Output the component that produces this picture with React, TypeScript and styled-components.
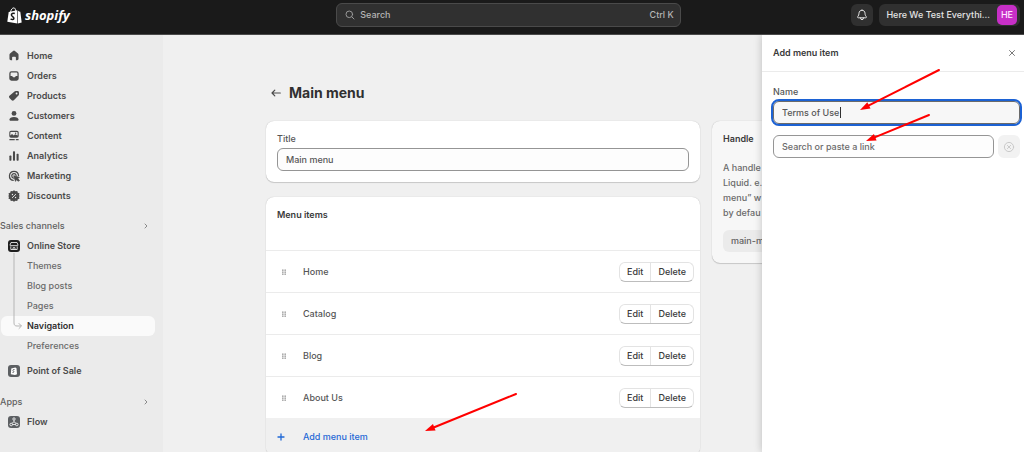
import React, { useState } from "react";
import styled, { createGlobalStyle, css } from "styled-components";

const Global = createGlobalStyle`
  *, *::before, *::after { box-sizing: border-box; }
  body {
    margin: 0;
    background: #f0f0f0;
    color: #565656;
    font: 450 9px/14px Inter, "Liberation Sans", sans-serif;
    overflow: hidden;
  }
  button, input { font: inherit; color: inherit; }
  button { border: 0; padding: 0; background: none; cursor: pointer; }
  h1, h2, p, ul { margin: 0; padding: 0; }
  ul { list-style: none; }
  svg { display: block; flex: none; }
`;

const Shell = styled.div`
  display: flex;
  flex-direction: column;
  height: 100vh;
`;

const TopBar = styled.header`
  display: flex;
  align-items: flex-start;
  justify-content: space-between;
  height: 35px;
  flex: none;
  padding: 3px 4px 0 7px;
  background: #1a1a1a;
  border-bottom: 1px solid #4a4a4a;
  color: #e3e3e3;
`;

const Logo = styled.a`
  display: flex;
  align-items: center;
  gap: 3px;
  flex: 1;
  height: 24px;
  color: #fff;
  text-decoration: none;
  font: italic 700 13px/20px "Open Sans", sans-serif;
`;

const SearchBox = styled.label`
  display: flex;
  align-items: center;
  gap: 5px;
  width: 34%;
  height: 24px;
  margin-right: 10px;
  padding: 0 6px 0 8px;
  border: 1px solid #4a4a4a;
  border-radius: 6px;
  background: #303030;
  color: #b5b5b5;
`;

const SearchInput = styled.input`
  flex: 1;
  min-width: 0;
  padding: 0;
  border: 0;
  outline: 0;
  background: none;
  &::placeholder { color: #b5b5b5; opacity: 1; }
`;

const TopActions = styled.div`
  display: flex;
  flex: 1;
  justify-content: flex-end;
  gap: 6px;
  padding-top: 1px;
`;

const BellButton = styled.button`
  display: grid;
  place-items: center;
  width: 22px;
  height: 22px;
  border-radius: 6px;
  background: #303030;
`;

const StoreButton = styled.button`
  display: flex;
  align-items: center;
  gap: 7px;
  height: 22px;
  padding: 0 3px 0 7px;
  border-radius: 6px;
  background: #303030;
  font-weight: 500;
`;

const Avatar = styled.span`
  width: 20px;
  border-radius: 5px;
  background: #c72fc7;
  color: #ffe6ff;
  line-height: 20px;
`;

const Body = styled.div`
  display: flex;
  flex: 1;
  min-height: 0;
`;

const Sidebar = styled.nav`
  width: 163px;
  flex: none;
  padding: 11px 8px 0 0;
  background: #ebebeb;
`;

const NavLink = styled.a<{ $sub?: boolean; $active?: boolean }>`
  display: flex;
  align-items: center;
  gap: 7px;
  height: 20px;
  margin-left: 1px;
  padding-left: 7px;
  border-radius: 6px;
  color: #4a4a4a;
  font-weight: 600;
  text-decoration: none;
  ${(p) => p.$sub && css`padding-left: 26px; color: #6a6a6a; font-weight: 500;`}
  ${(p) => p.$active && css`background: #fafafa; color: #303030; font-weight: 600;`}
`;

const NavHeading = styled.button<{ $top: number }>`
  display: flex;
  align-items: center;
  justify-content: space-between;
  width: 100%;
  height: 20px;
  margin-top: ${(p) => p.$top}px;
  padding-right: 6px;
  color: #616161;
  font-weight: 550;
`;

const SubNav = styled.div`
  position: relative;
  margin-bottom: 5px;
`;

const Branch = styled.svg`
  position: absolute;
  left: 13px;
  top: -3px;
`;

const Main = styled.main`
  flex: 1;
  min-width: 0;
  padding: 48px 95px 0 103px;
`;

const PageHead = styled.div`
  display: flex;
  align-items: center;
  gap: 8px;
  height: 20px;
  padding-left: 5px;
`;

const PageTitle = styled.h1`
  color: #303030;
  font-size: 14px;
  font-weight: 700;
  line-height: 20px;
`;

const Columns = styled.div`
  display: grid;
  grid-template-columns: 434fr 217fr;
  align-items: start;
  gap: 12px;
  margin-top: 18px;
`;

const Stack = styled.div`
  display: grid;
  gap: 15px;
`;

const Card = styled.section<{ $muted?: boolean }>`
  overflow: hidden;
  border-radius: 8px;
  background: ${(p) => (p.$muted ? "#f7f7f7" : "#fff")};
  box-shadow: 0 1px 1px #00000026, 0 0 1px #00000040;
`;

const CardPad = styled.div`
  padding: 11px;
`;

const Label = styled.label`
  display: block;
  margin-bottom: 2px;
`;

const TextInput = styled.input`
  display: block;
  width: 100%;
  min-width: 0;
  height: 23px;
  padding: 0 8px;
  border: 1px solid #959595;
  border-radius: 6px;
  outline: 0;
  background: #fdfdfd;
  &::placeholder { color: #6a6a6a; opacity: 1; }
`;

const CardTitle = styled.h2`
  color: #3a3a3a;
  font-size: 9px;
  font-weight: 600;
  line-height: 14px;
`;

const ItemsHead = styled.div`
  height: 53px;
  padding: 11px;
`;

const Item = styled.li`
  display: flex;
  align-items: center;
  height: 42px;
  padding: 0 6px 0 15px;
  border-top: 1px solid #ebebeb;
`;

const ItemName = styled.span`
  flex: 1;
  padding-left: 16px;
`;

const ButtonGroup = styled.div`
  display: flex;
  height: 20px;
  border: 1px solid #e3e3e3;
  border-bottom-color: #bdbdbd;
  border-radius: 6px;
`;

const GroupButton = styled.button`
  padding: 0 7px;
  color: #3a3a3a;
  font-weight: 500;
  line-height: 18px;
  & + & { border-left: 1px solid #e3e3e3; }
`;

const AddRow = styled.div`
  background: #f0f0f0;
`;

const AddButton = styled.button`
  display: flex;
  align-items: center;
  gap: 18px;
  width: 100%;
  height: 37px;
  padding-left: 11px;
  color: #1f68d6;
  font-weight: 500;
`;

const HandleText = styled.p`
  margin: 14px 0 10px;
  color: #6a6a6a;
  line-height: 15px;
`;

const HandleValue = styled.div`
  padding: 4px 8px;
  border-radius: 6px;
  background: #ebebeb;
  color: #616161;
`;

const Drawer = styled.aside`
  position: absolute;
  top: 35px;
  right: 0;
  bottom: 0;
  width: 262px;
  background: #fff;
  box-shadow: 0 0 8px #00000038;
  clip-path: inset(0 0 0 -12px);
`;

const DrawerHead = styled.div`
  display: flex;
  align-items: center;
  justify-content: space-between;
  height: 37px;
  padding: 0 8px 0 11px;
  border-bottom: 1px solid #ebebeb;
`;

const DrawerBody = styled.div`
  padding: 13px 4px 0 11px;
`;

const FocusedInput = styled(TextInput)`
  background: #f7f7f7;
  border-color: #6a6a6a;
  outline: 2px solid #1c62d4;
  outline-offset: 0;
`;

const NameField = styled.div`
  position: relative;
`;

const Caret = styled.span`
  position: absolute;
  left: 67px;
  top: 6px;
  width: 1px;
  height: 11px;
  background: #303030;
`;

const LinkRow = styled.div`
  display: flex;
  gap: 4px;
  margin-top: 11px;
`;

const ClearButton = styled.button`
  display: grid;
  place-items: center;
  width: 22px;
  height: 23px;
  flex: none;
  border-radius: 6px;
  background: #f2f2f2;
  color: #cacaca;
`;

const Pointer = styled.svg<{ $left: number; $top: number }>`
  position: absolute;
  left: ${(p) => p.$left}px;
  top: ${(p) => p.$top}px;
  pointer-events: none;
`;

type IconName =
  | "home" | "orders" | "products" | "customers" | "content"
  | "analytics" | "marketing" | "discounts";

const shapes: Record<IconName, React.ReactNode> = {
  home: <path d="M5.9 1.1a1.7 1.7 0 0 1 2.2 0l3.5 3.1c.4.4.7.9.7 1.5v4.6c0 1-.7 1.7-1.7 1.7H9.200V8.800a1 1 0 0 0-1-1H5.800a1 1 0 0 0-1 1V12H3.400c-1 0-1.700-.7-1.700-1.700V5.700c0-.6.3-1.100.7-1.500z" />,
  orders: <path fillRule="evenodd" d="M4 1.500h6A2.500 2.500 0 0 1 12.500 4v6A2.500 2.500 0 0 1 10 12.500H4A2.500 2.500 0 0 1 1.500 10V4A2.500 2.500 0 0 1 4 1.500ZM3 4v3h1.500c.6 0 .8.4 1 .9.2.4.5.6 1.500.6s1.300-.2 1.500-.6c.2-.5.4-.9 1-.9H11V4a1 1 0 0 0-1-1H4a1 1 0 0 0-1 1Z" />,
  products: <path fillRule="evenodd" d="M7.600 1.800c.4-.4.9-.6 1.400-.6h2.200c.9 0 1.600.7 1.600 1.600V5c0 .5-.2 1-.6 1.400l-5.400 5.500c-.7.7-1.800.7-2.500 0L1.700 9.200c-.7-.7-.7-1.800 0-2.400ZM10 5.200a1.100 1.100 0 1 0 0-2.200 1.100 1.100 0 0 0 0 2.200Z" />,
  customers: <><circle cx="7" cy="4" r="2.800" /><path d="M1.600 11.500c0-1.900 2.200-3.400 5.400-3.400s5.400 1.500 5.400 3.400c0 .5-.4.9-.9.9h-9c-.5 0-.9-.4-.9-.9Z" /></>,
  content: <><path fillRule="evenodd" d="M3.500 1h7A2 2 0 0 1 12.500 3v4a2 2 0 0 1-2 2h-7a2 2 0 0 1-2-2V3a2 2 0 0 1 2-2Zm-.8 5.500 2-1.800 2 1.600 1.500-1.200 3 1.300V3c0-.5-.3-.8-.8-.8H3.500c-.5 0-.8.3-.8.8Z" /><circle cx="8.900" cy="3.800" r=".8" /><rect x="1.500" y="10.500" width="6.500" height="1.500" rx=".7" /><rect x="9" y="10.500" width="3.500" height="1.500" rx=".7" /></>,
  analytics: <><rect x="1.600" y="6.500" width="2.400" height="6" rx=".8" /><rect x="5.800" y="1.500" width="2.400" height="11" rx=".8" /><rect x="10" y="4.500" width="2.400" height="8" rx=".8" /></>,
  marketing: <><path d="M6 12.200A5.300 5.300 0 1 1 12.300 6.500M6.300 9.400A2.600 2.600 0 1 1 9.500 6.300" fill="none" stroke="currentColor" strokeWidth="1.500" strokeLinecap="round" /><path d="m6.700 6.700 6.500 2-2.100 1.200 2.200 2.100-1.200 1.200-2.100-2.200-1.200 2.200Z" stroke="currentColor" strokeLinejoin="round" /></>,
  discounts: <><path d="m7 .4 1.700 1.200 2.100-.4.600 2 2 .7-.5 2L13.600 7l-.7 1.100.5 2-2 .7-.6 2-2.100-.4L7 13.600l-1.700-1.200-2.100.4-.6-2-2-.7.500-2L.4 7l.7-1.100-.5-2 2-.7.600-2 2.100.4Z" /><path d="m5 9 4-4" stroke="#ebebeb" strokeLinecap="round" /><circle cx="5.200" cy="5.300" r=".8" fill="#ebebeb" /><circle cx="8.800" cy="8.700" r=".8" fill="#ebebeb" /></>,
};

const NavIcon = ({ name }: { name: IconName }) => (
  <svg width="12" height="12" viewBox="0 0 14 14" fill="currentColor" aria-hidden="true">{shapes[name]}</svg>
);

const AppIcon = ({ fill, children }: { fill: string; children: React.ReactNode }) => (
  <svg width="12" height="12" viewBox="0 0 12 12" fill="none" stroke="#fff" aria-hidden="true">
    <rect width="12" height="12" rx="3" fill={fill} stroke="none" />
    {children}
  </svg>
);

const Chevron = () => (
  <svg width="6" height="8" viewBox="0 0 6 8" fill="none" stroke="#8a8a8a" strokeLinecap="round" strokeLinejoin="round" aria-hidden="true">
    <path d="M2 2l2 2-2 2" />
  </svg>
);

const DragHandle = () => (
  <svg width="6" height="8" viewBox="0 0 6 8" fill="#777" aria-hidden="true">
    {[1.500, 3.500, 5.500].map((y) => [1.200, 3.500].map((x) => <rect key={`${x}${y}`} x={x} y={y} width="1.300" height="1.300" rx=".3" />))}
  </svg>
);

interface ArrowProps { left: number; top: number; width: number; height: number; }

const RedArrow = ({ left, top, width, height }: ArrowProps) => {
  const w = width - 2;
  const h = height - 5;
  const len = Math.hypot(w, h);
  const ux = w / len;
  const uy = -h / len;
  const tipY = height - 3;
  const bx = ux * 10;
  const by = tipY + uy * 10;
  return (
    <Pointer $left={left} $top={top} width={width} height={height} overflow="visible" aria-hidden="true">
      <path d={`M${w} 2L${bx} ${by}`} stroke="#f00" strokeWidth="2" strokeLinecap="round" />
      <path d={`M0 ${tipY}L${bx - uy * 3.500} ${by + ux * 3.500}L${bx + uy * 3.500} ${by - ux * 3.500}Z`} fill="#f00" />
    </Pointer>
  );
};

const primary: [IconName, string][] = [
  ["home", "Home"], ["orders", "Orders"], ["products", "Products"], ["customers", "Customers"],
  ["content", "Content"], ["analytics", "Analytics"], ["marketing", "Marketing"], ["discounts", "Discounts"],
];
const storePages = ["Themes", "Blog posts", "Pages", "Navigation", "Preferences"];
const menuItems = ["Home", "Catalog", "Blog", "About Us"];

export default function App() {
  const [title, setTitle] = useState("Main menu");
  const [name, setName] = useState("Terms of Use");

  return (
    <Shell>
      <Global />
      <TopBar>
        <Logo href="#" aria-label="shopify">
          <svg width="15" height="17" viewBox="0 0 15 17" aria-hidden="true">
            <path d="M3.600 5C4 2.700 5.300.9 6.800.9c1.100 0 1.700 1.200 1.900 3" fill="none" stroke="#fff" strokeWidth="1" />
            <path d="M1.700 4.900 10 3.200l.4 13.300L.3 14.800Z" fill="#fff" />
            <path d="m10.600 3.300 1.500 1.200 1.200.2 1.400 10.700-3.700 1Z" fill="#fff" />
            <path d="M7.800 6.500C5.900 5.900 4.300 6.700 4.400 8c.1 1.500 2.700 1.700 2.500 3.400-.1 1.400-1.900 1.500-3.300.5" fill="none" stroke="#1a1a1a" strokeWidth="1.500" />
          </svg>
          shopify
        </Logo>
        <SearchBox>
          <svg width="10" height="10" viewBox="0 0 10 10" fill="none" stroke="#999" strokeLinecap="round" aria-hidden="true">
            <circle cx="4.300" cy="4.300" r="3.300" /><path d="m6.800 6.800 2.200 2.200" />
          </svg>
          <SearchInput placeholder="Search" aria-label="Search" />
          <span>Ctrl K</span>
        </SearchBox>
        <TopActions>
          <BellButton aria-label="Notifications">
            <svg width="12" height="12" viewBox="0 0 12 12" fill="none" stroke="#e3e3e3" strokeLinejoin="round" strokeLinecap="round" aria-hidden="true">
              <path d="M6 1.200C4.200 1.200 3 2.600 3 4.200c0 1.600-.4 2.300-1.200 3.300-.5.700-.2 1.300.5 1.300h7.400c.7 0 1-.6.5-1.300C9.400 6.500 9 5.800 9 4.200c0-1.600-1.200-3-3-3ZM4.500 9a1.500 1.700 0 0 0 3 0" />
            </svg>
          </BellButton>
          <StoreButton>Here We Test Everythi...<Avatar>HE</Avatar></StoreButton>
        </TopActions>
      </TopBar>

      <Body>
        <Sidebar>
          {primary.map(([icon, label]) => (
            <NavLink key={label} href="#"><NavIcon name={icon} />{label}</NavLink>
          ))}
          <NavHeading $top={10}>Sales channels<Chevron /></NavHeading>
          <NavLink href="#">
            <AppIcon fill="#1f1f1f">
              <path d="M3 2.500h6l1 2.500c0 1.300-2 1.300-2 0 0 1.300-2 1.300-2 0 0 1.300-2 1.300-2 0 0 1.300-2 1.300-2 0ZM2.800 6.500v3h6.400v-3M5 9.500V7.700h2v1.800" strokeWidth=".8" />
            </AppIcon>
            Online Store
          </NavLink>
          <SubNav>
            {storePages.map((label) => (
              <NavLink key={label} href="#" $sub $active={label === "Navigation"}>{label}</NavLink>
            ))}
            <Branch width="10" height="78" viewBox="0 0 10 78" fill="none" stroke="#b5b5b5" strokeLinecap="round" aria-hidden="true">
              <path d="M1 0v70c0 2 1 3 3 3h4M6 70.500 8.500 73 6 75.500" />
            </Branch>
          </SubNav>
          <NavLink href="#">
            <AppIcon fill="#5c5f62">
              <path d="m3.300 3.500 4-1 1.200.8.500 6-2 .7-4.200-.7Z" fill="#fff" stroke="none" />
              <path d="M6.500 4.500c-1.500-.4-2 .8-1.200 1.400.9.600.8 1.800-.8 1.500" stroke="#5c5f62" />
            </AppIcon>
            Point of Sale
          </NavLink>
          <NavHeading $top={11}>Apps<Chevron /></NavHeading>
          <NavLink href="#">
            <AppIcon fill="#5c5f62">
              <g strokeWidth=".8"><circle cx="6" cy="3" r="1.200" /><circle cx="3.200" cy="8.500" r="1.300" /><circle cx="8.800" cy="8.500" r="1.300" /><path d="M6 4.200v1.600L3.800 7.400M6 5.800l2.200 1.600M4.500 8.500h3" /></g>
            </AppIcon>
            Flow
          </NavLink>
        </Sidebar>

        <Main>
          <PageHead>
            <svg width="10" height="8" viewBox="0 0 10 8" fill="none" stroke="#4a4a4a" strokeWidth="1.200" strokeLinecap="round" strokeLinejoin="round" aria-hidden="true">
              <path d="M9.300 4H1M3.800 1.200 1 4l2.800 2.800" />
            </svg>
            <PageTitle>Main menu</PageTitle>
          </PageHead>
          <Columns>
            <Stack>
              <Card>
                <CardPad>
                  <Label htmlFor="title">Title</Label>
                  <TextInput id="title" value={title} onChange={(e) => setTitle(e.target.value)} />
                </CardPad>
              </Card>
              <Card>
                <ItemsHead><CardTitle>Menu items</CardTitle></ItemsHead>
                <ul>
                  {menuItems.map((item) => (
                    <Item key={item}>
                      <DragHandle />
                      <ItemName>{item}</ItemName>
                      <ButtonGroup>
                        <GroupButton>Edit</GroupButton>
                        <GroupButton>Delete</GroupButton>
                      </ButtonGroup>
                    </Item>
                  ))}
                </ul>
                <AddRow>
                  <AddButton>
                    <svg width="8" height="8" viewBox="0 0 8 8" stroke="#1f68d6" strokeWidth="1.300" strokeLinecap="round" aria-hidden="true">
                      <path d="M4 1v6M1 4h6" />
                    </svg>
                    Add menu item
                  </AddButton>
                </AddRow>
              </Card>
            </Stack>
            <Card $muted>
              <CardPad>
                <CardTitle>Handle</CardTitle>
                <HandleText>
                  A handle<br />Liquid. e.<br />menu” w<br />by defau
                </HandleText>
                <HandleValue>main-m</HandleValue>
              </CardPad>
            </Card>
          </Columns>
        </Main>
      </Body>

      <Drawer aria-label="Add menu item">
        <DrawerHead>
          <CardTitle>Add menu item</CardTitle>
          <button aria-label="Close">
            <svg width="8" height="8" viewBox="0 0 8 8" stroke="#7a7a7a" strokeLinecap="round" aria-hidden="true">
              <path d="m1.500 1.500 5 5M6.500 1.500l-5 5" />
            </svg>
          </button>
        </DrawerHead>
        <DrawerBody>
          <Label htmlFor="name">Name</Label>
          <NameField>
            <FocusedInput id="name" value={name} onChange={(e) => setName(e.target.value)} />
            <Caret />
          </NameField>
          <LinkRow>
            <TextInput placeholder="Search or paste a link" aria-label="Link" />
            <ClearButton aria-label="Clear link">
              <svg width="12" height="12" viewBox="0 0 12 12" fill="none" stroke="currentColor" strokeLinecap="round" aria-hidden="true">
                <circle cx="6" cy="6" r="4.600" /><path d="m4.400 4.400 3.200 3.200M7.600 4.400 4.400 7.600" />
              </svg>
            </ClearButton>
          </LinkRow>
        </DrawerBody>
        <RedArrow left={98} top={33} width={81} height={45} />
        <RedArrow left={104} top={78} width={65} height={31} />
      </Drawer>
      <RedArrow left={425} top={392} width={93} height={42} />
    </Shell>
  );
}
